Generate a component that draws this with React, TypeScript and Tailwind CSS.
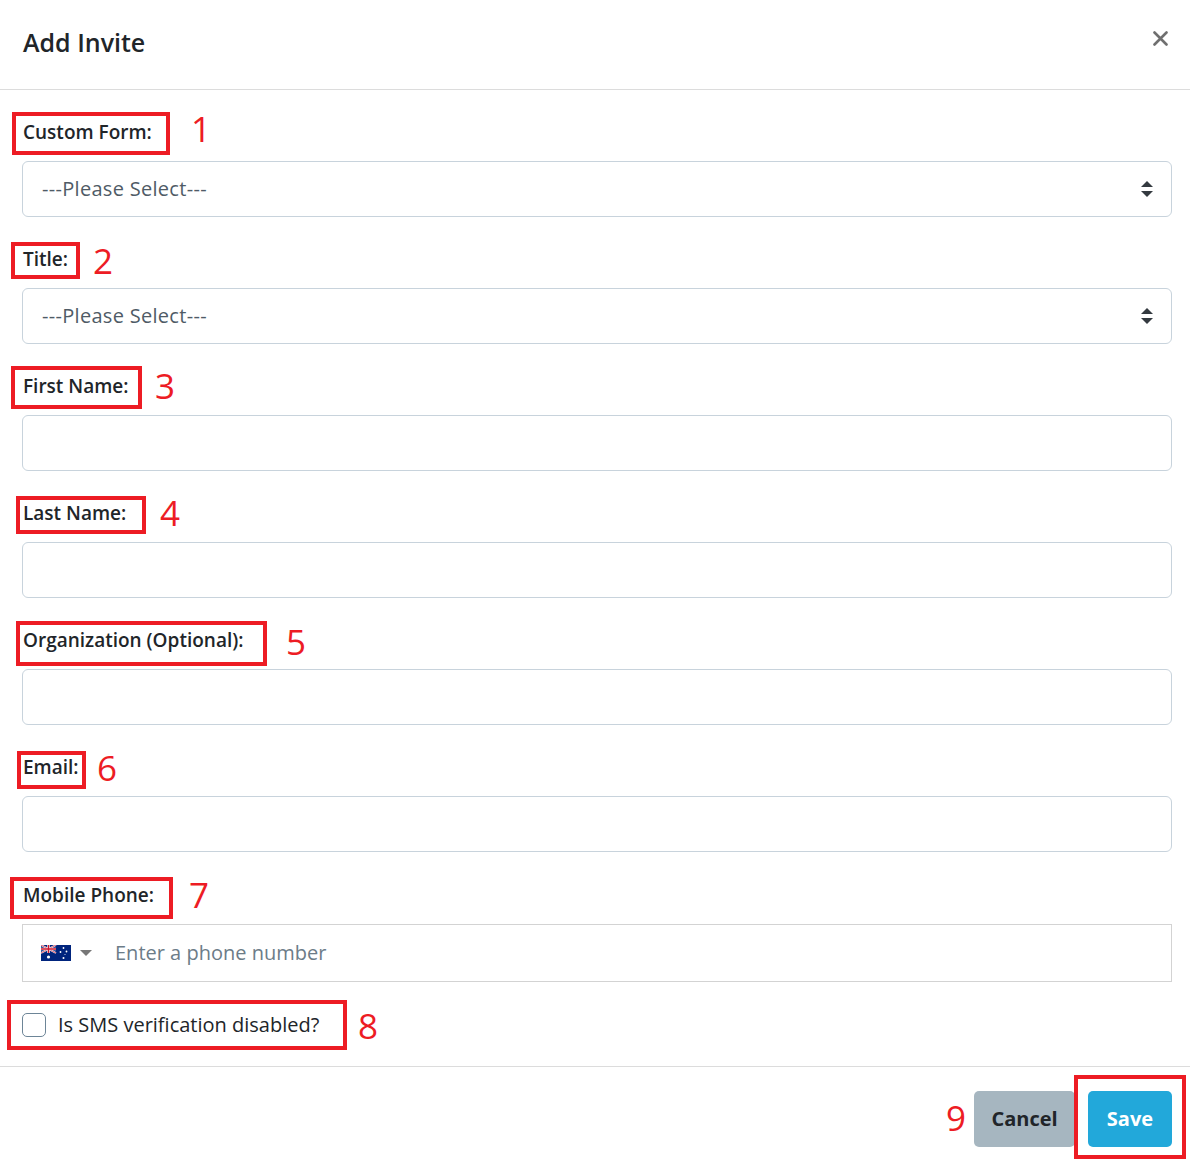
import React from 'react'

const font = { fontFamily: '"Open Sans", "Noto Sans", sans-serif' }

type Field = {
  label: string
  kind: 'select' | 'text'
}

const fields: Field[] = [
  { label: 'Custom Form:', kind: 'select' },
  { label: 'Title:', kind: 'select' },
  { label: 'First Name:', kind: 'text' },
  { label: 'Last Name:', kind: 'text' },
  { label: 'Organization (Optional):', kind: 'text' },
  { label: 'Email:', kind: 'text' },
]

// red annotation boxes and numbers, page coordinates
const boxes = [
  { l: 12, t: 112, w: 158, h: 43 },
  { l: 11, t: 242, w: 69, h: 37 },
  { l: 11, t: 366, w: 131, h: 43 },
  { l: 16, t: 496, w: 130, h: 38 },
  { l: 16, t: 621, w: 251, h: 45 },
  { l: 17, t: 751, w: 69, h: 38 },
  { l: 10, t: 877, w: 163, h: 42 },
  { l: 7, t: 1000, w: 340, h: 50 },
  { l: 1074, t: 1075, w: 112, h: 84 },
]

const numbers = [
  { n: '1', l: 191, t: 111 },
  { n: '2', l: 93, t: 243 },
  { n: '3', l: 155, t: 368 },
  { n: '4', l: 160, t: 495 },
  { n: '5', l: 286, t: 624 },
  { n: '6', l: 97, t: 750 },
  { n: '7', l: 189, t: 877 },
  { n: '8', l: 358, t: 1008 },
  { n: '9', l: 946, t: 1100 },
]

function SelectArrows() {
  return (
    <svg width="12" height="16" viewBox="0 0 12 16" className="text-[#343a40]">
      <path d="M6 0 L12 6 H0 Z" fill="currentColor" />
      <path d="M0 10 H12 L6 16 Z" fill="currentColor" />
    </svg>
  )
}

function AuFlag() {
  return (
    <svg width="30" height="16" viewBox="0 0 30 16">
      <rect width="30" height="16" fill="#00247d" />
      <g>
        <path d="M0 0 L15 8 M15 0 L0 8" stroke="#fff" strokeWidth="1.8" />
        <path d="M0 0 L15 8 M15 0 L0 8" stroke="#cf142b" strokeWidth="0.7" />
        <path d="M7.5 0 V8 M0 4 H15" stroke="#fff" strokeWidth="2.6" />
        <path d="M7.5 0 V8 M0 4 H15" stroke="#cf142b" strokeWidth="1.4" />
      </g>
      <circle cx="7.5" cy="12" r="1.6" fill="#fff" />
      <circle cx="22.5" cy="3" r="0.9" fill="#fff" />
      <circle cx="19.5" cy="7" r="0.9" fill="#fff" />
      <circle cx="25.5" cy="6.5" r="0.9" fill="#fff" />
      <circle cx="22.5" cy="13" r="1" fill="#fff" />
      <circle cx="24" cy="9.5" r="0.5" fill="#fff" />
    </svg>
  )
}

export default function App() {
  return (
    <div className="relative w-[1190px] bg-white text-[#212529]" style={font}>
      <div className="flex items-center justify-between h-[90px] pl-[23px] pr-[22px] border-b border-[#dcdcdc]">
        <h1 className="text-[25px] font-semibold leading-none -mt-[4px]">Add Invite</h1>
        <button type="button" aria-label="Close" className="-mt-[12px]">
          <svg width="15" height="15" viewBox="0 0 15 15">
            <path d="M1.5 1.5 L13.5 13.5 M13.5 1.5 L1.5 13.5" stroke="#6f6f6f" strokeWidth="2.6" strokeLinecap="round" />
          </svg>
        </button>
      </div>

      <div className="pl-[22px] pr-[18px] pt-[27px] pb-[29px]">
        {fields.map((f, i) => (
          <div key={f.label} className={i === 0 ? '' : 'mt-[27px]'}>
            <label className="block h-[30px] mb-[14px] pl-px text-[19px] leading-[30px] font-semibold">
              {f.label}
            </label>
            {f.kind === 'select' ? (
              <div className="flex items-center justify-between h-[56px] pl-[19px] pr-[18px] rounded-[6px] border border-[#c8d3dc]">
                <span className="text-[20px] tracking-[0.3px] text-[#4f5b66]">---Please Select---</span>
                <SelectArrows />
              </div>
            ) : (
              <div className="h-[56px] rounded-[6px] border border-[#c8d3dc]" />
            )}
          </div>
        ))}

        <div className="mt-[28px]">
          <label className="block h-[30px] mb-[14px] pl-px text-[19px] leading-[30px] font-semibold">
            Mobile Phone:
          </label>
          <div className="flex items-center h-[58px] pl-[18px] border border-[#d3d3d3]">
            <AuFlag />
            <svg width="12" height="6" viewBox="0 0 12 6" className="ml-[9px]">
              <path d="M0 0 H12 L6 6 Z" fill="#777" />
            </svg>
            <span className="ml-[23px] text-[20px] text-[#6c7c88]">Enter a phone number</span>
          </div>
        </div>

        <div className="flex items-center mt-[31px] h-[24px]">
          <span className="w-[24px] h-[24px] rounded-[5px] border border-[#6d8597] bg-white" />
          <span className="ml-[12px] text-[20px]">Is SMS verification disabled?</span>
        </div>
      </div>

      <div className="flex justify-end gap-[13px] border-t border-[#dcdcdc] pt-[24px] pb-[18px] pr-[18px]">
        <button type="button" className="h-[56px] w-[101px] rounded-[5px] bg-[#a6b6c0] text-[20px] font-bold text-[#212529]">
          Cancel
        </button>
        <button type="button" className="h-[56px] w-[84px] rounded-[5px] bg-[#22a8da] text-[20px] font-bold text-white">
          Save
        </button>
      </div>

      <div className="pointer-events-none absolute inset-0">
        {boxes.map((b, i) => (
          <div
            key={i}
            className="absolute border-4 border-[#ed1c24]"
            style={{ left: b.l, top: b.t, width: b.w, height: b.h }}
          />
        ))}
        {numbers.map((n) => (
          <span
            key={n.n}
            className="absolute text-[35px] leading-none font-normal text-[#ed1c24]"
            style={{ left: n.l, top: n.t }}
          >
            {n.n}
          </span>
        ))}
      </div>
    </div>
  )
}
